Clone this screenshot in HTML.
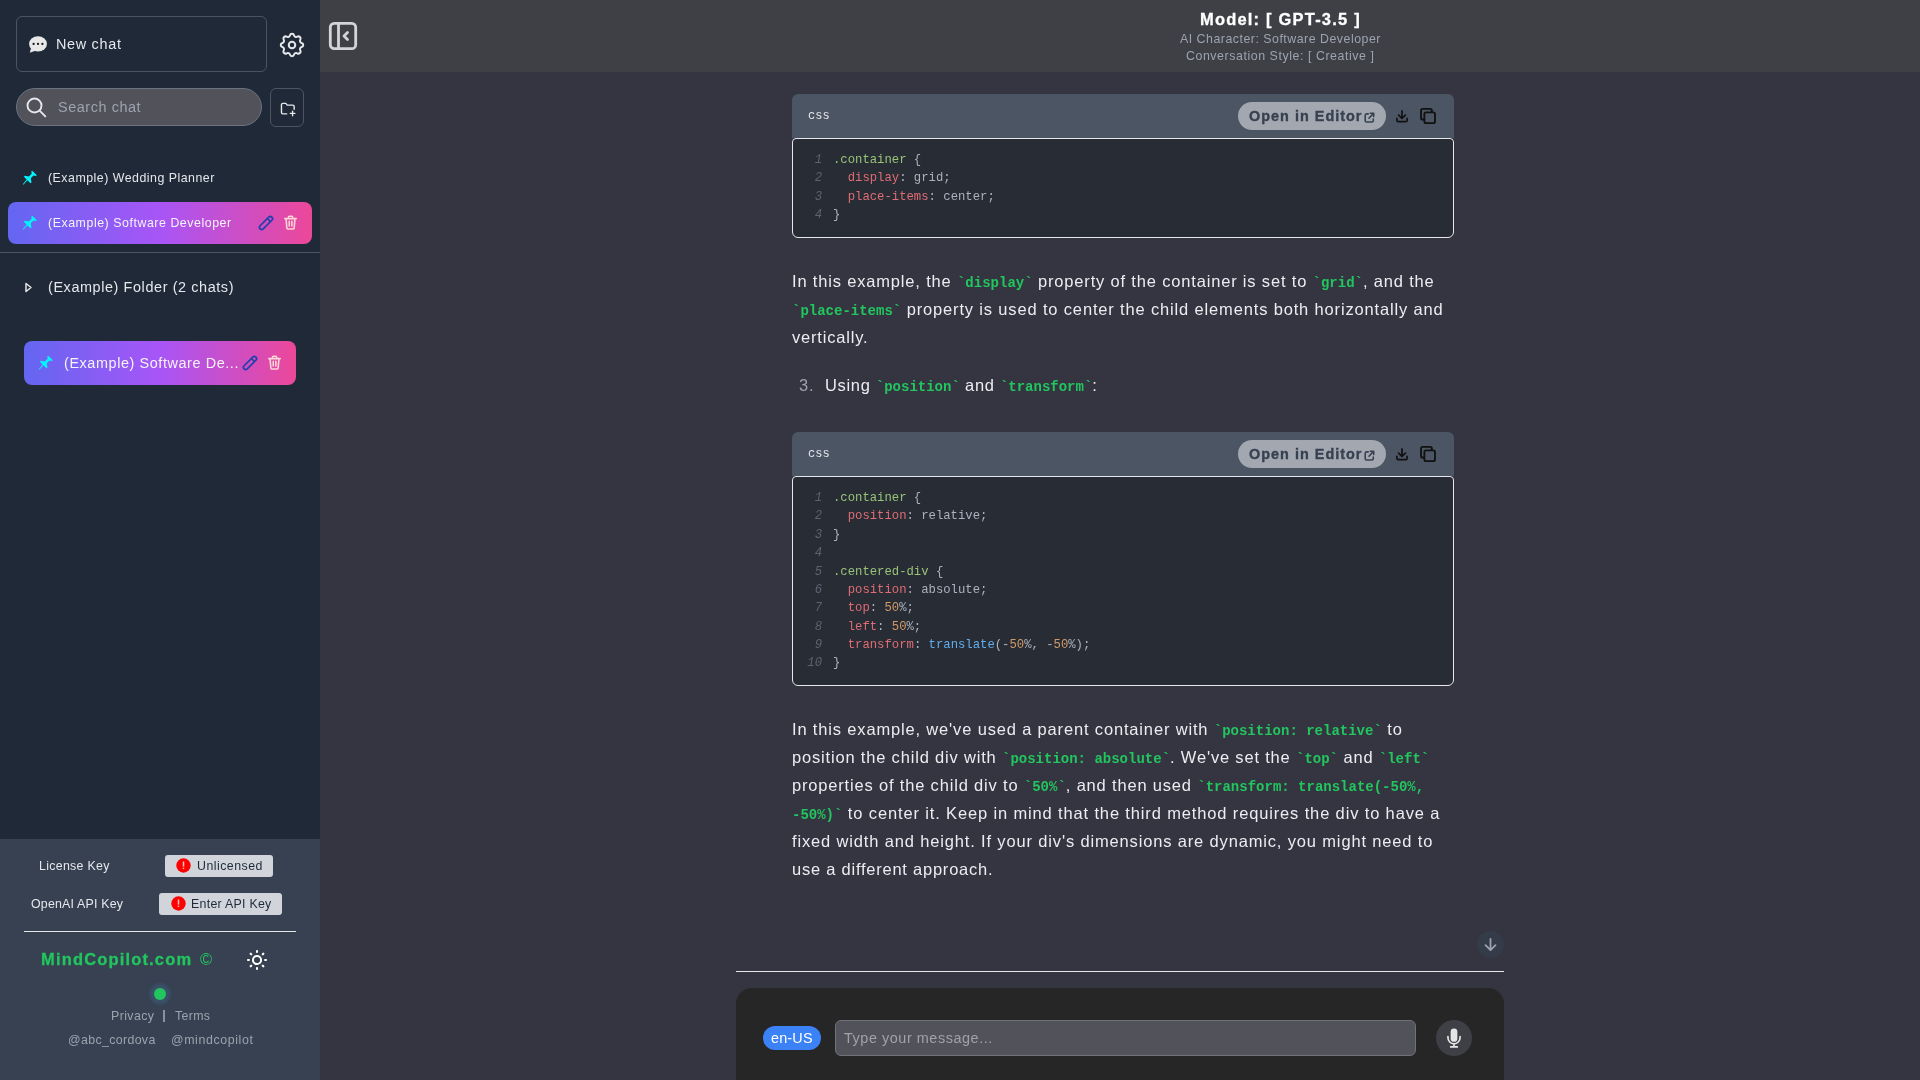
<!DOCTYPE html><html><head><meta charset="utf-8"><title>MindCopilot</title><style>
*{margin:0;padding:0}
html,body{width:1920px;height:1080px;overflow:hidden;background:#343541}
body{position:relative;font-family:"Liberation Sans", sans-serif}
.r{position:absolute} svg{overflow:visible}
.t{position:absolute;white-space:pre;line-height:1;will-change:transform}
.t.s{font-family:"Liberation Sans", sans-serif}
.t.m{font-family:"Liberation Mono", monospace}
code{font-family:"Liberation Mono", monospace;font-weight:700;font-size:14px;color:#22c55e;letter-spacing:0}
.ln{font-family:"Liberation Mono", monospace;font-size:12.25px;line-height:18.375px;font-style:italic;color:#5c6370;text-align:right;will-change:transform}
.code{font-family:"Liberation Mono", monospace;font-size:12.25px;line-height:18.375px;color:#abb2bf;white-space:pre;will-change:transform}
.k-sel{color:#98c379} .k-prop{color:#e06c75} .k-num{color:#d19a66} .k-fn{color:#61aeee}
</style></head><body>
<div class="r" style="left:0px;top:0px;width:320px;height:1080px;background:#1f2937"></div>
<div class="r" style="left:16px;top:16px;width:251px;height:56px;box-sizing:border-box;border:1px solid rgba(255,255,255,0.2);border-radius:6px"></div>
<svg class="r" style="left:28px;top:35px;" width="20" height="19" viewBox="0 0 20 19"><ellipse cx="10" cy="8.8" rx="9" ry="7.6" fill="#e8e8e8"/><path d="M3.2 12.5 L1.8 17.8 L8 15.5 Z" fill="#e8e8e8"/><circle cx="5.6" cy="8.9" r="1.1" fill="#111"/><circle cx="10" cy="8.9" r="1.1" fill="#111"/><circle cx="14.4" cy="8.9" r="1.1" fill="#111"/></svg>
<div id="t1" class="t s " style="letter-spacing:0.695px;left:55.5px;top:36.79px;font-size:14.420px;color:#e5e7eb;font-weight:400;">New chat</div>
<svg class="r" style="left:276.5px;top:29.5px;" width="30" height="30" viewBox="0 0 24 24"><path fill="none" stroke="#e5e7eb" stroke-width="1.6" stroke-linecap="round" stroke-linejoin="round" d="M10.325 4.317c.426-1.756 2.924-1.756 3.35 0a1.724 1.724 0 002.573 1.066c1.543-.94 3.31.826 2.37 2.37a1.724 1.724 0 001.065 2.572c1.756.426 1.756 2.924 0 3.35a1.724 1.724 0 00-1.066 2.573c.94 1.543-.826 3.31-2.37 2.37a1.724 1.724 0 00-2.572 1.065c-.426 1.756-2.924 1.756-3.35 0a1.724 1.724 0 00-2.573-1.066c-1.543.94-3.31-.826-2.37-2.37a1.724 1.724 0 00-1.065-2.572c-1.756-.426-1.756-2.924 0-3.35a1.724 1.724 0 001.066-2.573c-.94-1.543.826-3.31 2.37-2.37.996.608 2.296.07 2.572-1.065z"/><circle cx="12" cy="12" r="2.6" fill="none" stroke="#e5e7eb" stroke-width="1.6"/></svg>
<div class="r" style="left:16px;top:88px;width:246px;height:38px;box-sizing:border-box;border:1px solid #6b7280;border-radius:19px;background:#52525b"></div>
<svg class="r" style="left:25px;top:96px;" width="23" height="23" viewBox="0 0 23 23"><circle cx="9.5" cy="9.5" r="7" fill="none" stroke="#e5e7eb" stroke-width="1.9"/><path d="M14.6 14.6 L20.3 20.3" stroke="#e5e7eb" stroke-width="1.9" stroke-linecap="round"/></svg>
<div id="t2" class="t s " style="letter-spacing:0.572px;left:57.5px;top:99.99px;font-size:14.420px;color:#9ca3af;font-weight:400;">Search chat</div>
<div class="r" style="left:270px;top:88px;width:34px;height:39px;box-sizing:border-box;border:1px solid #4b5563;border-radius:6px"></div>
<svg class="r" style="left:279.5px;top:101.5px;" width="16" height="15" viewBox="0 0 18 17"><path d="M7.5 13.5 H3.2 a1.6 1.6 0 0 1 -1.6 -1.6 V3.2 a1.6 1.6 0 0 1 1.6 -1.6 h3.3 l1.6 1.9 h6.3 a1.6 1.6 0 0 1 1.6 1.6 v3.2" fill="none" stroke="#e5e7eb" stroke-width="1.6" stroke-linecap="round" stroke-linejoin="round"/><path d="M14.2 10.3 v5.2 M11.6 12.9 h5.2" stroke="#e5e7eb" stroke-width="1.6" stroke-linecap="round"/></svg>
<svg class="r" style="left:22.2px;top:170.2px;" width="15.5" height="15.5" viewBox="0 0 14 14"><path d="M9.2 0.6 L13.4 4.8 L12.4 5.4 L10.4 5.0 L7.9 7.5 L8.6 11.2 L7.6 12.0 L4.9 9.3 L1.2 13.3 L0.7 12.8 L4.2 8.6 L1.7 6.1 L2.5 5.1 L6.2 5.8 L8.7 3.3 L8.4 1.4 Z" fill="#00f5ff"/></svg>
<div id="t3" class="t s " style="letter-spacing:0.500px;left:48.3px;top:171.54px;font-size:12.360px;color:#e5e7eb;font-weight:400;">(Example) Wedding Planner</div>
<div class="r" style="left:8px;top:202px;width:304px;height:42px;background:linear-gradient(to right,#6366f1,#a855f7,#ec4899);border-radius:8px"></div>
<svg class="r" style="left:22.2px;top:215.2px;" width="15.5" height="15.5" viewBox="0 0 14 14"><path d="M9.2 0.6 L13.4 4.8 L12.4 5.4 L10.4 5.0 L7.9 7.5 L8.6 11.2 L7.6 12.0 L4.9 9.3 L1.2 13.3 L0.7 12.8 L4.2 8.6 L1.7 6.1 L2.5 5.1 L6.2 5.8 L8.7 3.3 L8.4 1.4 Z" fill="#00f5ff"/></svg>
<div id="t4" class="t s " style="letter-spacing:0.549px;left:48.3px;top:216.54px;font-size:12.360px;color:#f3f4f6;font-weight:400;">(Example) Software Developer</div>
<svg class="r" style="left:259px;top:216px;" width="14" height="14" viewBox="0 0 14 14"><g transform="rotate(-45 7 7)"><rect x="-1.3" y="4.8" width="16.6" height="4.4" rx="2.2" fill="none" stroke="#1e40af" stroke-width="1.7"/><path d="M11.2 4.8 V9.2" stroke="#1e40af" stroke-width="1.6"/></g></svg>
<svg class="r" style="left:282.5px;top:215.3px;" width="15" height="15" viewBox="0 0 14.5 15"><path d="M1.5 3.6 H13 M5.2 3.6 V2.2 a1 1 0 0 1 1 -1 h2.2 a1 1 0 0 1 1 1 V3.6 M2.8 3.6 L3.6 13 a1 1 0 0 0 1 1 h5.3 a1 1 0 0 0 1 -1 L11.7 3.6 M6 6.3 V11 M8.6 6.3 V11" fill="none" stroke="#fcd5d5" stroke-width="1.6" stroke-linecap="round" stroke-linejoin="round"/></svg>
<div class="r" style="left:0px;top:252px;width:320px;height:1px;background:#4b5563"></div>
<svg class="r" style="left:24px;top:282px;" width="9" height="11" viewBox="0 0 9 11"><path d="M2 1.5 L7 5.5 L2 9.5 Z" fill="none" stroke="#e5e7eb" stroke-width="1.5" stroke-linejoin="round"/></svg>
<div id="t5" class="t s " style="letter-spacing:0.597px;left:48.3px;top:279.99px;font-size:14.420px;color:#e5e7eb;font-weight:400;">(Example) Folder (2 chats)</div>
<div class="r" style="left:24px;top:341px;width:272px;height:44px;background:linear-gradient(to right,#6366f1,#a855f7,#ec4899);border-radius:8px"></div>
<svg class="r" style="left:38.2px;top:355.2px;" width="15.5" height="15.5" viewBox="0 0 14 14"><path d="M9.2 0.6 L13.4 4.8 L12.4 5.4 L10.4 5.0 L7.9 7.5 L8.6 11.2 L7.6 12.0 L4.9 9.3 L1.2 13.3 L0.7 12.8 L4.2 8.6 L1.7 6.1 L2.5 5.1 L6.2 5.8 L8.7 3.3 L8.4 1.4 Z" fill="#00f5ff"/></svg>
<div id="t6" class="t s " style="letter-spacing:0.587px;left:64.2px;top:356.09px;font-size:14.420px;color:#f3f4f6;font-weight:400;">(Example) Software De...</div>
<svg class="r" style="left:243px;top:356px;" width="14" height="14" viewBox="0 0 14 14"><g transform="rotate(-45 7 7)"><rect x="-1.3" y="4.8" width="16.6" height="4.4" rx="2.2" fill="none" stroke="#1e40af" stroke-width="1.7"/><path d="M11.2 4.8 V9.2" stroke="#1e40af" stroke-width="1.6"/></g></svg>
<svg class="r" style="left:267px;top:355.3px;" width="15" height="15" viewBox="0 0 14.5 15"><path d="M1.5 3.6 H13 M5.2 3.6 V2.2 a1 1 0 0 1 1 -1 h2.2 a1 1 0 0 1 1 1 V3.6 M2.8 3.6 L3.6 13 a1 1 0 0 0 1 1 h5.3 a1 1 0 0 0 1 -1 L11.7 3.6 M6 6.3 V11 M8.6 6.3 V11" fill="none" stroke="#fcd5d5" stroke-width="1.6" stroke-linecap="round" stroke-linejoin="round"/></svg>
<div class="r" style="left:0px;top:839px;width:320px;height:241px;background:#374151"></div>
<div id="t7" class="t s " style="letter-spacing:0.315px;left:39.2px;top:860.14px;font-size:12.360px;color:#e5e7eb;font-weight:400;">License Key</div>
<div class="r" style="left:165px;top:855px;width:108px;height:22px;background:#d1d5db;border-radius:3px"></div>
<svg class="r" style="left:176.4px;top:858.4px;" width="15" height="15" viewBox="0 0 15 15"><circle cx="7.5" cy="7.5" r="7.2" fill="#ff0000"/><path d="M7.5 3.5 V8.6" stroke="#f0c8c0" stroke-width="1.5"/><path d="M6.8 10.3 H8.2" stroke="#f0c8c0" stroke-width="1.3"/></svg>
<div id="t8" class="t s " style="letter-spacing:0.475px;left:197.4px;top:859.74px;font-size:12.360px;color:#1f2937;font-weight:400;">Unlicensed</div>
<div id="t9" class="t s " style="letter-spacing:0.203px;left:30.6px;top:898.14px;font-size:12.360px;color:#e5e7eb;font-weight:400;">OpenAI API Key</div>
<div class="r" style="left:159px;top:893px;width:123px;height:22px;background:#d1d5db;border-radius:3px"></div>
<svg class="r" style="left:170.5px;top:896.2px;" width="15" height="15" viewBox="0 0 15 15"><circle cx="7.5" cy="7.5" r="7.2" fill="#ff0000"/><path d="M7.5 3.5 V8.6" stroke="#f0c8c0" stroke-width="1.5"/><path d="M6.8 10.3 H8.2" stroke="#f0c8c0" stroke-width="1.3"/></svg>
<div id="t10" class="t s " style="letter-spacing:0.279px;left:191.4px;top:898.24px;font-size:12.360px;color:#1f2937;font-weight:400;">Enter API Key</div>
<div class="r" style="left:24px;top:931px;width:272px;height:1px;background:#e5e7eb"></div>
<div id="t11" class="t s " style="letter-spacing:1.181px;left:41.4px;top:951.25px;font-size:16.480px;color:#22c55e;font-weight:700;-webkit-text-stroke:0.3px #22c55e;">MindCopilot.com</div>
<div id="t12" class="t s " style="letter-spacing:3.859px;left:199.6px;top:951.25px;font-size:16.480px;color:#22c55e;font-weight:400;">©</div>
<svg class="r" style="left:245px;top:948px;" width="24" height="24" viewBox="0 0 24 24"><circle cx="12" cy="12" r="4.1" fill="none" stroke="#fff" stroke-width="2"/><path d="M12 3.0 V3.9" stroke="#fff" stroke-width="2.1" stroke-linecap="round" transform="rotate(0 12 12)"/><path d="M12 3.0 V3.9" stroke="#fff" stroke-width="2.1" stroke-linecap="round" transform="rotate(45 12 12)"/><path d="M12 3.0 V3.9" stroke="#fff" stroke-width="2.1" stroke-linecap="round" transform="rotate(90 12 12)"/><path d="M12 3.0 V3.9" stroke="#fff" stroke-width="2.1" stroke-linecap="round" transform="rotate(135 12 12)"/><path d="M12 3.0 V3.9" stroke="#fff" stroke-width="2.1" stroke-linecap="round" transform="rotate(180 12 12)"/><path d="M12 3.0 V3.9" stroke="#fff" stroke-width="2.1" stroke-linecap="round" transform="rotate(225 12 12)"/><path d="M12 3.0 V3.9" stroke="#fff" stroke-width="2.1" stroke-linecap="round" transform="rotate(270 12 12)"/><path d="M12 3.0 V3.9" stroke="#fff" stroke-width="2.1" stroke-linecap="round" transform="rotate(315 12 12)"/></svg>
<div class="r" style="left:151px;top:985px;width:18px;height:18px;border-radius:50%;background:#3a5068;box-shadow:0 0 3px 2px rgba(58,80,104,0.8)"></div>
<div class="r" style="left:154px;top:988px;width:12px;height:12px;border-radius:50%;background:#22c55e"></div>
<div id="t13" class="t s " style="letter-spacing:0.417px;left:111px;top:1009.54px;font-size:12.360px;color:#9ca3af;font-weight:400;">Privacy</div>
<div class="r" style="left:163.4px;top:1010px;width:1.2px;height:12px;background:#8a919c"></div>
<div id="t14" class="t s " style="letter-spacing:0.338px;left:174.6px;top:1009.54px;font-size:12.360px;color:#9ca3af;font-weight:400;">Terms</div>
<div id="t15" class="t s " style="letter-spacing:0.361px;left:67.5px;top:1034.04px;font-size:12.360px;color:#9ca3af;font-weight:400;">@abc_cordova</div>
<div id="t16" class="t s " style="letter-spacing:0.622px;left:171px;top:1034.04px;font-size:12.360px;color:#9ca3af;font-weight:400;">@mindcopilot</div>
<div class="r" style="left:320px;top:0px;width:1600px;height:72px;background:#3f4046"></div>
<svg class="r" style="left:328px;top:21px;" width="30" height="30" viewBox="0 0 30 30"><rect x="2.3" y="2.3" width="25.4" height="25.4" rx="4" fill="none" stroke="#d4d4d8" stroke-width="2.8"/><path d="M10.5 2 V28" stroke="#d4d4d8" stroke-width="2.8"/><path d="M19.5 11.5 L16 15 L19.5 18.5" fill="none" stroke="#d4d4d8" stroke-width="2.8" stroke-linecap="round" stroke-linejoin="round"/></svg>
<div id="t17" class="t s " style="letter-spacing:1.209px;left:1200px;top:11.45px;font-size:16.480px;color:#ffffff;font-weight:700;-webkit-text-stroke:0.3px #ffffff;">Model: [ GPT-3.5 ]</div>
<div id="t18" class="t s " style="letter-spacing:0.503px;left:1180px;top:33.29px;font-size:12.360px;color:#9ca3af;font-weight:400;">AI Character: Software Developer</div>
<div id="t19" class="t s " style="letter-spacing:0.565px;left:1186.25px;top:49.54px;font-size:12.360px;color:#9ca3af;font-weight:400;">Conversation Style: [ Creative ]</div>
<div class="r" style="left:792px;top:94px;width:662px;height:44px;background:#4b5563;border-radius:6px 6px 0 0"></div>
<div id="t20" class="t m " style="letter-spacing:0.026px;left:807.8px;top:109.64px;font-size:12.000px;color:#e5e7eb;font-weight:400;">css</div>
<div class="r" style="left:1238px;top:102px;width:148px;height:28px;background:#a3a8b0;border-radius:14px"></div>
<div id="t21" class="t s " style="letter-spacing:1.018px;left:1248.8px;top:109.29px;font-size:14.420px;color:#374151;font-weight:700;-webkit-text-stroke:0.35px #374151;">Open in Editor</div>
<svg class="r" style="left:1363.5px;top:111.5px;" width="11" height="11" viewBox="0 0 11 11"><path d="M4.2 1.9 H2.6 a1.4 1.4 0 0 0 -1.4 1.4 V8.6 a1.4 1.4 0 0 0 1.4 1.4 H7.9 a1.4 1.4 0 0 0 1.4 -1.4 V7 M5 6.2 L9.3 1.6 M6.3 1.2 H9.7 V4.6" fill="none" stroke="#374151" stroke-width="1.6" stroke-linecap="round" stroke-linejoin="round"/></svg>
<svg class="r" style="left:1396px;top:110px;" width="12" height="13" viewBox="0 0 12 13"><path d="M6 0.9 V8.3 M2.6 5.2 L6 8.5 L9.4 5.2" fill="none" stroke="#111" stroke-width="1.7" stroke-linecap="round" stroke-linejoin="round"/><path d="M0.9 8.4 V10.4 a1.2 1.2 0 0 0 1.2 1.2 H9.9 a1.2 1.2 0 0 0 1.2 -1.2 V8.4" fill="none" stroke="#111" stroke-width="1.7" stroke-linecap="round"/></svg>
<svg class="r" style="left:1420px;top:108px;" width="16" height="16" viewBox="0 0 15.5 15.7"><rect x="0.9" y="0.9" width="10.6" height="10.4" rx="1.6" fill="none" stroke="#111" stroke-width="1.8"/><rect x="4.2" y="4.3" width="10.4" height="10.6" rx="1.6" fill="#4b5563" stroke="#111" stroke-width="1.8"/></svg>
<div class="r" style="left:792px;top:138px;width:662px;height:99.5px;box-sizing:border-box;background:#282c34;border:1px solid #e5e7eb;border-radius:4px 4px 6px 6px"></div>
<div class="r ln" style="left:800px;top:151px;width:22px"><div>1</div><div>2</div><div>3</div><div>4</div></div>
<div class="r code" style="left:833px;top:151px"><div><span class="k-sel">.container</span> {</div><div>  <span class="k-prop">display</span>: grid;</div><div>  <span class="k-prop">place-items</span>: center;</div><div>}</div></div>
<div class="r" style="left:792px;top:432px;width:662px;height:44px;background:#4b5563;border-radius:6px 6px 0 0"></div>
<div id="t22" class="t m " style="letter-spacing:0.026px;left:807.8px;top:447.64px;font-size:12.000px;color:#e5e7eb;font-weight:400;">css</div>
<div class="r" style="left:1238px;top:440px;width:148px;height:28px;background:#a3a8b0;border-radius:14px"></div>
<div id="t23" class="t s " style="letter-spacing:1.018px;left:1248.8px;top:447.29px;font-size:14.420px;color:#374151;font-weight:700;-webkit-text-stroke:0.35px #374151;">Open in Editor</div>
<svg class="r" style="left:1363.5px;top:449.5px;" width="11" height="11" viewBox="0 0 11 11"><path d="M4.2 1.9 H2.6 a1.4 1.4 0 0 0 -1.4 1.4 V8.6 a1.4 1.4 0 0 0 1.4 1.4 H7.9 a1.4 1.4 0 0 0 1.4 -1.4 V7 M5 6.2 L9.3 1.6 M6.3 1.2 H9.7 V4.6" fill="none" stroke="#374151" stroke-width="1.6" stroke-linecap="round" stroke-linejoin="round"/></svg>
<svg class="r" style="left:1396px;top:448px;" width="12" height="13" viewBox="0 0 12 13"><path d="M6 0.9 V8.3 M2.6 5.2 L6 8.5 L9.4 5.2" fill="none" stroke="#111" stroke-width="1.7" stroke-linecap="round" stroke-linejoin="round"/><path d="M0.9 8.4 V10.4 a1.2 1.2 0 0 0 1.2 1.2 H9.9 a1.2 1.2 0 0 0 1.2 -1.2 V8.4" fill="none" stroke="#111" stroke-width="1.7" stroke-linecap="round"/></svg>
<svg class="r" style="left:1420px;top:446px;" width="16" height="16" viewBox="0 0 15.5 15.7"><rect x="0.9" y="0.9" width="10.6" height="10.4" rx="1.6" fill="none" stroke="#111" stroke-width="1.8"/><rect x="4.2" y="4.3" width="10.4" height="10.6" rx="1.6" fill="#4b5563" stroke="#111" stroke-width="1.8"/></svg>
<div class="r" style="left:792px;top:476px;width:662px;height:209.75px;box-sizing:border-box;background:#282c34;border:1px solid #e5e7eb;border-radius:4px 4px 6px 6px"></div>
<div class="r ln" style="left:800px;top:489px;width:22px"><div>1</div><div>2</div><div>3</div><div>4</div><div>5</div><div>6</div><div>7</div><div>8</div><div>9</div><div>10</div></div>
<div class="r code" style="left:833px;top:489px"><div><span class="k-sel">.container</span> {</div><div>  <span class="k-prop">position</span>: relative;</div><div>}</div><div>&nbsp;</div><div><span class="k-sel">.centered-div</span> {</div><div>  <span class="k-prop">position</span>: absolute;</div><div>  <span class="k-prop">top</span>: <span class="k-num">50</span>%;</div><div>  <span class="k-prop">left</span>: <span class="k-num">50</span>%;</div><div>  <span class="k-prop">transform</span>: <span class="k-fn">translate</span>(-<span class="k-num">50</span>%, -<span class="k-num">50</span>%);</div><div>}</div></div>
<div id="t24" class="t s p" style="letter-spacing:0.837px;left:792px;top:273.35px;font-size:16.480px;color:#ececf1;font-weight:400;">In this example, the <code>`display`</code> property of the container is set to <code>`grid`</code>, and the</div>
<div id="t25" class="t s p" style="letter-spacing:0.854px;left:792px;top:301.35px;font-size:16.480px;color:#ececf1;font-weight:400;"><code>`place-items`</code> property is used to center the child elements both horizontally and</div>
<div id="t26" class="t s p" style="letter-spacing:0.814px;left:792px;top:329.35px;font-size:16.480px;color:#ececf1;font-weight:400;">vertically.</div>
<div id="t27" class="t s " style="letter-spacing:0.758px;left:798.5px;top:377.05px;font-size:16.480px;color:#a1a1aa;font-weight:400;">3.</div>
<div id="t28" class="t s p" style="letter-spacing:0.685px;left:824.5px;top:377.05px;font-size:16.480px;color:#ececf1;font-weight:400;">Using <code>`position`</code> and <code>`transform`</code>:</div>
<div id="t29" class="t s p" style="letter-spacing:0.850px;left:792px;top:721.45px;font-size:16.480px;color:#ececf1;font-weight:400;">In this example, we've used a parent container with <code>`position: relative`</code> to</div>
<div id="t30" class="t s p" style="letter-spacing:0.830px;left:792px;top:749.45px;font-size:16.480px;color:#ececf1;font-weight:400;">position the child div with <code>`position: absolute`</code>. We've set the <code>`top`</code> and <code>`left`</code></div>
<div id="t31" class="t s p" style="letter-spacing:0.833px;left:792px;top:777.45px;font-size:16.480px;color:#ececf1;font-weight:400;">properties of the child div to <code>`50%`</code>, and then used <code>`transform: translate(-50%,</code></div>
<div id="t32" class="t s p" style="letter-spacing:0.868px;left:792px;top:805.45px;font-size:16.480px;color:#ececf1;font-weight:400;"><code>-50%)`</code> to center it. Keep in mind that the third method requires the div to have a</div>
<div id="t33" class="t s p" style="letter-spacing:0.858px;left:792px;top:833.45px;font-size:16.480px;color:#ececf1;font-weight:400;">fixed width and height. If your div's dimensions are dynamic, you might need to</div>
<div id="t34" class="t s p" style="letter-spacing:0.776px;left:792px;top:861.45px;font-size:16.480px;color:#ececf1;font-weight:400;">use a different approach.</div>
<div class="r" style="left:1477px;top:931px;width:27px;height:27px;border-radius:50%;background:rgba(55,65,81,0.55)"></div>
<svg class="r" style="left:1483px;top:937px;" width="15" height="15" viewBox="0 0 15 15"><path d="M7.5 2 V13 M2.5 8.2 L7.5 13.2 L12.5 8.2" fill="none" stroke="#9ca3af" stroke-width="1.8" stroke-linecap="round" stroke-linejoin="round"/></svg>
<div class="r" style="left:736px;top:971px;width:768px;height:1px;background:#e5e7eb"></div>
<div class="r" style="left:736px;top:988px;width:768px;height:120px;background:#262626;border-radius:16px 16px 0 0"></div>
<div class="r" style="left:763px;top:1026px;width:58px;height:24px;background:#3b82f6;border-radius:12px"></div>
<div id="t35" class="t s " style="letter-spacing:0.166px;left:771.3px;top:1030.59px;font-size:14.420px;color:#ffffff;font-weight:400;">en-US</div>
<div class="r" style="left:835px;top:1020px;width:581px;height:36px;box-sizing:border-box;background:#52525b;border:1px solid #71717a;border-radius:6px"></div>
<div id="t36" class="t s " style="letter-spacing:0.554px;left:843.5px;top:1030.59px;font-size:14.420px;color:#a1a1aa;font-weight:400;">Type your message...</div>
<div class="r" style="left:1436px;top:1020px;width:36px;height:36px;border-radius:50%;background:#3f3f46"></div>
<svg class="r" style="left:1446px;top:1027px;" width="16" height="21.5" viewBox="0 0 18 24"><rect x="5.2" y="1.6" width="7.6" height="15" rx="3.8" fill="#e5e5e5"/><path d="M2.2 10.6 V12 a6.8 6.8 0 0 0 13.6 0 V10.6 M9 18.8 V22 M5.3 22.3 H12.7" fill="none" stroke="#e5e5e5" stroke-width="1.9" stroke-linecap="round"/></svg>
</body></html>
